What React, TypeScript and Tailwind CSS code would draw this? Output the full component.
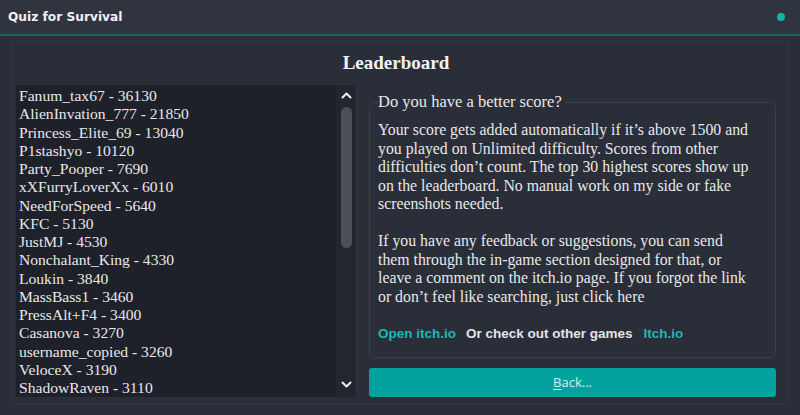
import React from "react";

const entries = [
  "Fanum_tax67 - 36130",
  "AlienInvation_777 - 21850",
  "Princess_Elite_69 - 13040",
  "P1stashyo - 10120",
  "Party_Pooper - 7690",
  "xXFurryLoverXx - 6010",
  "NeedForSpeed - 5640",
  "KFC - 5130",
  "JustMJ - 4530",
  "Nonchalant_King - 4330",
  "Loukin - 3840",
  "MassBass1 - 3460",
  "PressAlt+F4 - 3400",
  "Casanova - 3270",
  "username_copied - 3260",
  "VeloceX - 3190",
  "ShadowRaven - 3110",
  "Nova - 2980",
];

const para1 = [
  "Your score gets added automatically if it\u2019s above 1500 and",
  "you played on Unlimited difficulty. Scores from other",
  "difficulties don\u2019t count. The top 30 highest scores show up",
  "on the leaderboard. No manual work on my side or fake",
  "screenshots needed.",
];
const para2 = [
  "If you have any feedback or suggestions, you can send",
  "them through the in-game section designed for that, or",
  "leave a comment on the itch.io page. If you forgot the link",
  "or don\u2019t feel like searching, just click here",
];

function Chevron({ up }: { up?: boolean }) {
  return (
    <svg width="11" height="7" viewBox="0 0 11 7" fill="none">
      <path
        d={up ? "M1.5 5.5 L5.5 1.5 L9.5 5.5" : "M1.5 1.5 L5.5 5.5 L9.5 1.5"}
        stroke="#f2f2f2"
        strokeWidth="2"
        strokeLinecap="round"
        strokeLinejoin="round"
      />
    </svg>
  );
}

export default function App() {
  return (
    <div className="w-[800px] h-[415px] bg-[#2a2e38] flex flex-col overflow-hidden font-['Liberation_Serif',serif] text-[#e8e8ea]">
      <header className="h-[36px] shrink-0 bg-[#30343e] border-b-2 border-[#17645e] flex items-center justify-between pl-[8px] pr-[15px]">
        <span className="font-['DejaVu_Sans',sans-serif] font-bold text-[12.2px] text-[#f0f0f2]">
          Quiz for Survival
        </span>
        <span className="w-[8px] h-[8px] rounded-full bg-[#12b3a8]" />
      </header>

      <div className="flex-1 min-h-0 px-[11px] pt-[5px] pb-[10px]">
        <div className="h-full border border-[#343844] rounded-[3px] flex flex-col pl-[4px] pr-[12px] pb-[7px]">
          <div className="h-[43px] shrink-0 flex items-center justify-center">
            <h1 className="font-bold text-[19px] text-[#f2f2f4]">Leaderboard</h1>
          </div>

          <div className="flex-1 min-h-0 flex gap-[12px]">
            <div className="w-[341px] shrink-0 flex border-r border-[#30343e]">
              <div className="w-[320px] bg-[#1e2129] overflow-hidden pl-[3px] pt-[2px] text-[15.6px] leading-[18.25px]">
                {entries.map((e) => (
                  <div key={e} className="whitespace-nowrap">
                    {e}
                  </div>
                ))}
              </div>
              <div className="w-[20px] bg-[#23262e] flex flex-col items-center pt-[7px] pb-[9px]">
                <Chevron up />
                <div className="mt-[8px] w-[11px] h-[141px] rounded-full bg-[#4b505b]" />
                <div className="flex-1" />
                <Chevron />
              </div>
            </div>

            <div className="flex-1 flex flex-col pt-[8px]">
              <fieldset className="flex-1 min-h-0 border border-[#3a3e49] rounded-[6px] pl-[8px] pr-[6px] pt-[10px]">
                <legend className="text-[16.5px] leading-[18px] pr-[3px]">Do you have a better score?</legend>
                <div className="text-[15.8px] leading-[18.5px] whitespace-nowrap">
                  {para1.map((l) => (
                    <div key={l}>{l}</div>
                  ))}
                  <div className="h-[18.5px]" />
                  {para2.map((l) => (
                    <div key={l}>{l}</div>
                  ))}
                </div>
                <div className="mt-[19px] flex items-center font-['Liberation_Sans',sans-serif] font-bold text-[13.5px] leading-[18px] whitespace-nowrap">
                  <span className="text-[#17bab2]">Open itch.io</span>
                  <span className="ml-[10px] text-[#e4e4e6]">Or check out other games</span>
                  <span className="ml-[11px] text-[#17bab2]">Itch.io</span>
                </div>
              </fieldset>
              <button className="mt-[10px] h-[29px] shrink-0 rounded-[3px] bg-[#04a29f] font-['Open_Sans',sans-serif] text-[13px] text-[#d6eeee]">
                <span className="underline underline-offset-2">B</span>ack...
              </button>
            </div>
          </div>
        </div>
      </div>
    </div>
  );
}
